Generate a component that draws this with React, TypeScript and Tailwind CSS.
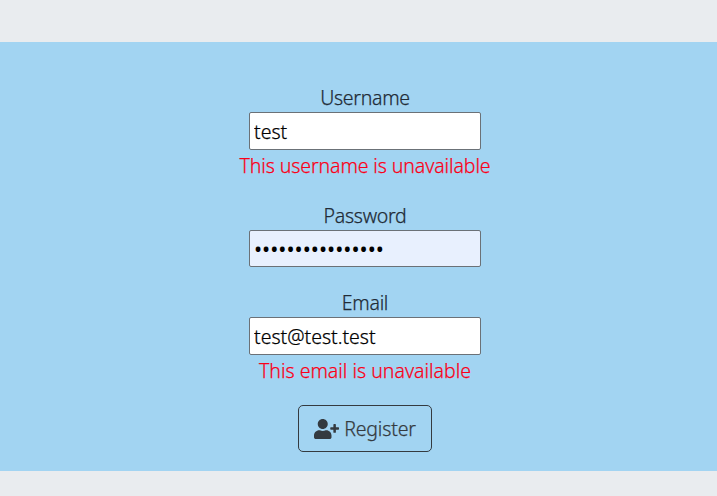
import { FaUserPlus } from "react-icons/fa";

const inputClass =
  "block w-[232px] rounded-[2px] border border-[#6b7177] pl-[4px] pr-[2px] text-black outline-none";

export default function App() {
  return (
    <div className="min-h-[496px] bg-[#e9ecef] pt-[42px] font-['Noto_Sans',sans-serif] text-[19.5px] font-light leading-[30px] text-[#212b36] [-webkit-text-stroke:0.25px_currentColor]">
      <form className="flex h-[429px] flex-col items-center bg-[#a2d4f2] pt-[41px] pl-[13px]">
        <label htmlFor="username" className="-mb-px tracking-[-0.3px]">Username</label>
        <input id="username" type="text" defaultValue="test" className={`${inputClass} h-[38px] bg-white`} />
        <p className="mt-px h-[30px] whitespace-nowrap tracking-[-0.1px] text-[#fa0018]">This username is unavailable</p>

        <label htmlFor="password" className="mt-[20px] -mb-px tracking-[-0.25px]">Password</label>
        <input id="password" type="password" defaultValue="testtesttesttest" className={`${inputClass} h-[37px] bg-[#e8f0fe] text-[21.6px] font-normal [-webkit-text-stroke:0px]`} />

        <label htmlFor="email" className="mt-[21px] -mb-px tracking-[-0.3px]">Email</label>
        <input id="email" type="text" defaultValue="test@test.test" className={`${inputClass} h-[38px] bg-white`} />
        <p className="mt-px h-[30px] whitespace-nowrap text-[#fa0018]">This email is unavailable</p>

        <button type="button" className="mt-[19px] flex h-[47px] w-[134px] items-center justify-center gap-[5px] rounded-[5px] border border-[#343a40] text-[#343a40]">
          <FaUserPlus className="h-[20px] w-[25px]" />
          <span className="tracking-[-0.15px]">Register</span>
        </button>
      </form>
    </div>
  );
}
